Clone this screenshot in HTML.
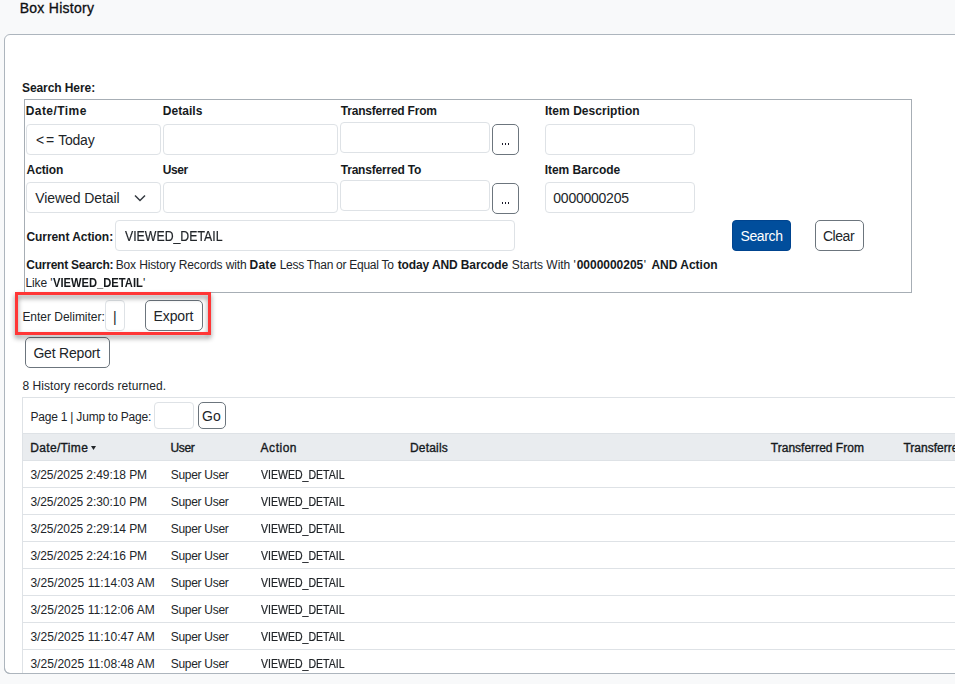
<!DOCTYPE html><html><head><meta charset="utf-8"><style>
html,body{margin:0;padding:0;}
body{width:955px;height:684px;overflow:hidden;background:#f8f9fa;position:relative;font-family:"Liberation Sans",sans-serif;color:#212529;}
.t{position:absolute;white-space:pre;}
.b{position:absolute;box-sizing:border-box;}
.d{position:absolute;width:1px;height:2px;background:#1a1a2a;}
</style></head><body>
<div class="t" style="left:19.7px;top:1px;font-size:14px;line-height:14px;letter-spacing:0.27px;color:#0d0f12;;-webkit-text-stroke:0.3px #0d0f12">Box History</div>
<div class="b" style="left:4px;top:34px;width:1000px;height:640px;border:1px solid #adb5bd;border-radius:6px;background:#fff;"></div>
<div class="t" style="left:22.0px;top:82px;font-size:12px;line-height:12px;font-weight:700;letter-spacing:-0.082px;color:#161a1d;">Search Here:</div>
<div class="b" style="left:24px;top:99px;width:888px;height:194px;border:1px solid #a7aeb5;border-radius:0px;background:#fff;"></div>
<div class="t" style="left:25.7px;top:105px;font-size:12px;line-height:12px;font-weight:700;letter-spacing:0.438px;color:#161a1d;">Date/Time</div>
<div class="t" style="left:162.7px;top:105px;font-size:12px;line-height:12px;font-weight:700;letter-spacing:0.067px;color:#161a1d;">Details</div>
<div class="t" style="left:340.8px;top:105px;font-size:12px;line-height:12px;font-weight:700;letter-spacing:-0.213px;color:#161a1d;">Transferred From</div>
<div class="t" style="left:544.9px;top:105px;font-size:12px;line-height:12px;font-weight:700;letter-spacing:0.047px;color:#161a1d;">Item Description</div>
<div class="b" style="left:26px;top:124px;width:135px;height:31px;border:1px solid #dee2e6;border-radius:4px;background:#fff;"></div>
<div class="b" style="left:163px;top:124px;width:175px;height:31px;border:1px solid #dee2e6;border-radius:4px;background:#fff;"></div>
<div class="b" style="left:340px;top:122px;width:150px;height:31px;border:1px solid #dee2e6;border-radius:4px;background:#fff;"></div>
<div class="b" style="left:492px;top:124px;width:27px;height:31px;border:1px solid #6c757d;border-radius:5px;background:#fff;"></div>
<div class="d" style="left:502px;top:143px"></div><div class="d" style="left:505px;top:143px"></div><div class="d" style="left:508px;top:143px"></div><div class="b" style="left:545px;top:124px;width:150px;height:31px;border:1px solid #dee2e6;border-radius:4px;background:#fff;"></div>
<div class="t" style="left:36.1px;top:133px;font-size:14px;line-height:14px;">&lt;</div>
<div class="t" style="left:46.0px;top:133px;font-size:14px;line-height:14px;">=</div>
<div class="t" style="left:58.3px;top:133px;font-size:14px;line-height:14px;letter-spacing:-0.25px;">Today</div>
<div class="t" style="left:26.6px;top:164px;font-size:12px;line-height:12px;font-weight:700;letter-spacing:-0.12px;color:#161a1d;">Action</div>
<div class="t" style="left:162.7px;top:164px;font-size:12px;line-height:12px;font-weight:700;letter-spacing:-0.367px;color:#161a1d;">User</div>
<div class="t" style="left:340.7px;top:164px;font-size:12px;line-height:12px;font-weight:700;letter-spacing:-0.2px;color:#161a1d;">Transferred To</div>
<div class="t" style="left:544.7px;top:164px;font-size:12px;line-height:12px;font-weight:700;letter-spacing:-0.045px;color:#161a1d;">Item Barcode</div>
<div class="b" style="left:26px;top:182px;width:135px;height:31px;border:1px solid #dee2e6;border-radius:4px;background:#fff;"></div>
<div class="t" style="left:35.2px;top:191px;font-size:14px;line-height:14px;letter-spacing:-0.083px;">Viewed Detail</div>
<svg style="position:absolute;left:134px;top:194px" width="12" height="8" viewBox="0 0 12 8"><path d="M1 1.5 L6 6.5 L11 1.5" fill="none" stroke="#343a40" stroke-width="1.5"/></svg>
<div class="b" style="left:163px;top:182px;width:175px;height:31px;border:1px solid #dee2e6;border-radius:4px;background:#fff;"></div>
<div class="b" style="left:340px;top:180px;width:150px;height:31px;border:1px solid #dee2e6;border-radius:4px;background:#fff;"></div>
<div class="b" style="left:492px;top:183px;width:27px;height:31px;border:1px solid #6c757d;border-radius:5px;background:#fff;"></div>
<div class="d" style="left:502px;top:202px"></div><div class="d" style="left:505px;top:202px"></div><div class="d" style="left:508px;top:202px"></div><div class="b" style="left:545px;top:182px;width:150px;height:31px;border:1px solid #dee2e6;border-radius:4px;background:#fff;"></div>
<div class="t" style="left:553.3px;top:191px;font-size:14px;line-height:14px;letter-spacing:-0.244px;">0000000205</div>
<div class="t" style="left:26.4px;top:231px;font-size:12px;line-height:12px;font-weight:700;letter-spacing:-0.057px;color:#161a1d;">Current Action:</div>
<div class="b" style="left:115px;top:220px;width:400px;height:31px;border:1px solid #dee2e6;border-radius:4px;background:#fff;"></div>
<div class="t" style="left:124.9px;top:229px;font-size:14px;line-height:14px;transform:scaleX(0.8784);transform-origin:0 0;-webkit-text-stroke:0.2px #212529;">VIEWED_DETAIL</div>
<div class="b" style="left:732px;top:220px;width:59px;height:31px;border:1px solid #00448f;border-radius:4px;background:#014e9c;"></div>
<div class="t" style="left:740.5px;top:229px;font-size:14px;line-height:14px;letter-spacing:-0.38px;color:#fff;">Search</div>
<div class="b" style="left:815px;top:220px;width:49px;height:31px;border:1px solid #6c757d;border-radius:5px;background:#fff;"></div>
<div class="t" style="left:822.9px;top:229px;font-size:14px;line-height:14px;letter-spacing:-0.425px;">Clear</div>
<div class="t" style="left:26.3px;top:259px;font-size:12px;line-height:12px;font-weight:700;letter-spacing:-0.243px;color:#161a1d;">Current Search:</div>
<div class="t" style="left:115.7px;top:259px;font-size:12px;line-height:12px;letter-spacing:-0.135px;">Box History Records with</div>
<div class="t" style="left:249.5px;top:259px;font-size:12px;line-height:12px;font-weight:700;letter-spacing:0.233px;color:#161a1d;">Date</div>
<div class="t" style="left:279.7px;top:259px;font-size:12px;line-height:12px;letter-spacing:-0.275px;">Less Than or Equal To</div>
<div class="t" style="left:397.7px;top:259px;font-size:12px;line-height:12px;font-weight:700;letter-spacing:-0.112px;color:#161a1d;">today AND Barcode</div>
<div class="t" style="left:511.7px;top:259px;font-size:12px;line-height:12px;letter-spacing:-0.008px;">Starts With '</div>
<div class="t" style="left:576.7px;top:259px;font-size:12px;line-height:12px;font-weight:700;letter-spacing:-0.022px;color:#161a1d;">0000000205</div>
<div class="t" style="left:643.8px;top:259px;font-size:12px;line-height:12px;">'</div>
<div class="t" style="left:651.4px;top:259px;font-size:12px;line-height:12px;font-weight:700;color:#161a1d;">AND Action</div>
<div class="t" style="left:25.6px;top:277px;font-size:12px;line-height:12px;letter-spacing:-0.16px;">Like '</div>
<div class="t" style="left:53.0px;top:277px;font-size:12px;line-height:12px;font-weight:700;color:#161a1d;transform:scaleX(0.9312);transform-origin:0 0;">VIEWED_DETAIL</div>
<div class="t" style="left:142.9px;top:277px;font-size:12px;line-height:12px;">'</div>
<div class="b" style="left:15px;top:292px;width:196px;height:43px;border:3px solid #ff3636;border-radius:0px;background:transparent;filter:drop-shadow(0 3px 2.5px rgba(0,0,0,0.45));z-index:5;"></div>
<div class="t" style="left:22.4px;top:311px;font-size:12px;line-height:12px;letter-spacing:-0.02px;">Enter Delimiter:</div>
<div class="b" style="left:105px;top:300px;width:20px;height:31px;border:1px solid #dee2e6;border-radius:4px;background:#fff;"></div>
<div class="t" style="left:113px;top:310px;font-size:14px;line-height:14px;">|</div>
<div class="b" style="left:145px;top:300px;width:58px;height:31px;border:1px solid #6c757d;border-radius:5px;background:#fff;"></div>
<div class="t" style="left:153.5px;top:309px;font-size:14px;line-height:14px;letter-spacing:-0.1px;">Export</div>
<div class="b" style="left:25px;top:337px;width:85px;height:31px;border:1px solid #6c757d;border-radius:5px;background:#fff;"></div>
<div class="t" style="left:33.4px;top:346px;font-size:14px;line-height:14px;letter-spacing:-0.189px;">Get Report</div>
<div class="t" style="left:22.4px;top:380px;font-size:12px;line-height:12px;letter-spacing:0.062px;">8 History records returned.</div>
<div class="b" style="left:22px;top:397px;width:1000px;height:300px;border:1px solid #dee2e6;background:#fff"></div>
<div class="t" style="left:30.4px;top:411px;font-size:12px;line-height:12px;letter-spacing:-0.205px;">Page 1 | Jump to Page:</div>
<div class="b" style="left:154px;top:402px;width:40px;height:27px;border:1px solid #dee2e6;border-radius:4px;background:#fff;"></div>
<div class="b" style="left:198px;top:402px;width:28px;height:27px;border:1px solid #6c757d;border-radius:5px;background:#fff;"></div>
<div class="t" style="left:202.0px;top:409px;font-size:14px;line-height:14px;letter-spacing:0.2px;">Go</div>
<div class="b" style="left:23px;top:433px;width:1000px;height:28px;background:#e9ecef;border-top:1px solid #dee2e6;border-bottom:1px solid #dee2e6"></div>
<div class="t" style="left:30.3px;top:442px;font-size:12px;line-height:12px;letter-spacing:0.325px;color:#161a1d;-webkit-text-stroke:0.35px #161a1d;">Date/Time</div>
<svg style="position:absolute;left:91px;top:446px" width="5" height="4" viewBox="0 0 5 4"><path d="M0 0 L5 0 L2.5 4 Z" fill="#212529"/></svg>
<div class="t" style="left:170.6px;top:442px;font-size:12px;line-height:12px;letter-spacing:-0.4px;color:#161a1d;-webkit-text-stroke:0.35px #161a1d;">User</div>
<div class="t" style="left:260.6px;top:442px;font-size:12px;line-height:12px;letter-spacing:0.52px;color:#161a1d;-webkit-text-stroke:0.35px #161a1d;">Action</div>
<div class="t" style="left:410.0px;top:442px;font-size:12px;line-height:12px;letter-spacing:0.183px;color:#161a1d;-webkit-text-stroke:0.35px #161a1d;">Details</div>
<div class="t" style="left:770.8px;top:442px;font-size:12px;line-height:12px;letter-spacing:0.013px;color:#161a1d;-webkit-text-stroke:0.35px #161a1d;">Transferred From</div>
<div class="t" style="left:903.4px;top:442px;font-size:12px;line-height:12px;letter-spacing:0.013px;color:#161a1d;-webkit-text-stroke:0.35px #161a1d;">Transferred To</div>
<div class="t" style="left:30.4px;top:469px;font-size:12px;line-height:12px;letter-spacing:-0.074px;">3/25/2025 2:49:18 PM</div>
<div class="t" style="left:170.8px;top:469px;font-size:12px;line-height:12px;letter-spacing:-0.3px;">Super User</div>
<div class="t" style="left:261.0px;top:469px;font-size:12px;line-height:12px;transform:scaleX(0.8779);transform-origin:0 0;-webkit-text-stroke:0.2px #212529;">VIEWED_DETAIL</div>
<div class="b" style="left:23px;top:487px;width:1000px;height:1px;background:#dee2e6"></div>
<div class="t" style="left:30.4px;top:496px;font-size:12px;line-height:12px;letter-spacing:-0.074px;">3/25/2025 2:30:10 PM</div>
<div class="t" style="left:170.8px;top:496px;font-size:12px;line-height:12px;letter-spacing:-0.3px;">Super User</div>
<div class="t" style="left:261.0px;top:496px;font-size:12px;line-height:12px;transform:scaleX(0.8779);transform-origin:0 0;-webkit-text-stroke:0.2px #212529;">VIEWED_DETAIL</div>
<div class="b" style="left:23px;top:514px;width:1000px;height:1px;background:#dee2e6"></div>
<div class="t" style="left:30.4px;top:523px;font-size:12px;line-height:12px;letter-spacing:-0.074px;">3/25/2025 2:29:14 PM</div>
<div class="t" style="left:170.8px;top:523px;font-size:12px;line-height:12px;letter-spacing:-0.3px;">Super User</div>
<div class="t" style="left:261.0px;top:523px;font-size:12px;line-height:12px;transform:scaleX(0.8779);transform-origin:0 0;-webkit-text-stroke:0.2px #212529;">VIEWED_DETAIL</div>
<div class="b" style="left:23px;top:541px;width:1000px;height:1px;background:#dee2e6"></div>
<div class="t" style="left:30.4px;top:550px;font-size:12px;line-height:12px;letter-spacing:-0.074px;">3/25/2025 2:24:16 PM</div>
<div class="t" style="left:170.8px;top:550px;font-size:12px;line-height:12px;letter-spacing:-0.3px;">Super User</div>
<div class="t" style="left:261.0px;top:550px;font-size:12px;line-height:12px;transform:scaleX(0.8779);transform-origin:0 0;-webkit-text-stroke:0.2px #212529;">VIEWED_DETAIL</div>
<div class="b" style="left:23px;top:568px;width:1000px;height:1px;background:#dee2e6"></div>
<div class="t" style="left:30.4px;top:577px;font-size:12px;line-height:12px;letter-spacing:0.06px;">3/25/2025 11:14:03 AM</div>
<div class="t" style="left:170.8px;top:577px;font-size:12px;line-height:12px;letter-spacing:-0.3px;">Super User</div>
<div class="t" style="left:261.0px;top:577px;font-size:12px;line-height:12px;transform:scaleX(0.8779);transform-origin:0 0;-webkit-text-stroke:0.2px #212529;">VIEWED_DETAIL</div>
<div class="b" style="left:23px;top:595px;width:1000px;height:1px;background:#dee2e6"></div>
<div class="t" style="left:30.4px;top:604px;font-size:12px;line-height:12px;letter-spacing:0.06px;">3/25/2025 11:12:06 AM</div>
<div class="t" style="left:170.8px;top:604px;font-size:12px;line-height:12px;letter-spacing:-0.3px;">Super User</div>
<div class="t" style="left:261.0px;top:604px;font-size:12px;line-height:12px;transform:scaleX(0.8779);transform-origin:0 0;-webkit-text-stroke:0.2px #212529;">VIEWED_DETAIL</div>
<div class="b" style="left:23px;top:622px;width:1000px;height:1px;background:#dee2e6"></div>
<div class="t" style="left:30.4px;top:631px;font-size:12px;line-height:12px;letter-spacing:0.06px;">3/25/2025 11:10:47 AM</div>
<div class="t" style="left:170.8px;top:631px;font-size:12px;line-height:12px;letter-spacing:-0.3px;">Super User</div>
<div class="t" style="left:261.0px;top:631px;font-size:12px;line-height:12px;transform:scaleX(0.8779);transform-origin:0 0;-webkit-text-stroke:0.2px #212529;">VIEWED_DETAIL</div>
<div class="b" style="left:23px;top:649px;width:1000px;height:1px;background:#dee2e6"></div>
<div class="t" style="left:30.4px;top:658px;font-size:12px;line-height:12px;letter-spacing:0.06px;">3/25/2025 11:08:48 AM</div>
<div class="t" style="left:170.8px;top:658px;font-size:12px;line-height:12px;letter-spacing:-0.3px;">Super User</div>
<div class="t" style="left:261.0px;top:658px;font-size:12px;line-height:12px;transform:scaleX(0.8779);transform-origin:0 0;-webkit-text-stroke:0.2px #212529;">VIEWED_DETAIL</div>
<div class="b" style="left:23px;top:676px;width:1000px;height:1px;background:#dee2e6"></div>
<div class="b" style="left:0;top:674px;width:955px;height:10px;background:#f8f9fa"></div>
<div class="b" style="left:4px;top:660px;width:1000px;height:14px;border:1px solid #adb5bd;border-top:none;border-radius:0 0 6px 6px;background:transparent"></div>
</body></html>
